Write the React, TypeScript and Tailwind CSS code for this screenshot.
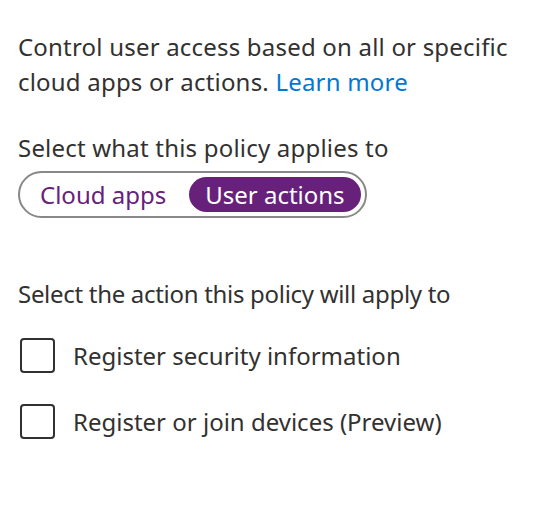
import { useState } from "react";

const actions = [
	"Register security information",
	"Register or join devices (Preview)",
];

export default function App() {
	const [scope, setScope] = useState<"apps" | "actions">("actions");
	const [checked, setChecked] = useState<Record<string, boolean>>({});

	return (
		<div className="min-h-[527px] bg-white pl-[18px] pt-[29px] font-['Noto_Sans',sans-serif] text-[24px] leading-[35px] text-[#323130]">
			<p className="w-[520px] tracking-[0.2px]">
				<span>Control user access based on all or specific</span>
				<br />
				<span>cloud apps or actions. </span>
				<a href="#" className="text-[#0078d4]">
					Learn more
				</a>
			</p>

			<p className="mt-[31px] tracking-[0.2px]">Select what this policy applies to</p>
			<div className="mt-[6px] inline-flex h-[47px] items-center gap-[7px] rounded-full border-2 border-[#8a8886] p-[4px]">
				<button
					onClick={() => setScope("apps")}
					className={`h-full rounded-full px-[16px] ${scope === "apps" ? "bg-[#68217a] text-white" : "text-[#68217a]"}`}
				>
					Cloud apps
				</button>
				<button
					onClick={() => setScope("actions")}
					className={`h-full rounded-full px-[16px] ${scope === "actions" ? "bg-[#68217a] text-white" : "text-[#68217a]"}`}
				>
					User actions
				</button>
			</div>

			<p className="mt-[58px] tracking-[-0.3px]">Select the action this policy will apply to</p>
			<div className="mt-[27px] flex flex-col gap-[31px]">
				{actions.map((label) => (
					<label key={label} className="flex items-center gap-[18px]">
						<input
							type="checkbox"
							checked={!!checked[label]}
							onChange={() =>
								setChecked((c) => ({ ...c, [label]: !c[label] }))
							}
							className="ml-[2px] h-[35px] w-[35px] appearance-none rounded-[4px] border-2 border-[#323130] checked:bg-[#323130]"
						/>
						<span>{label}</span>
					</label>
				))}
			</div>
		</div>
	);
}
